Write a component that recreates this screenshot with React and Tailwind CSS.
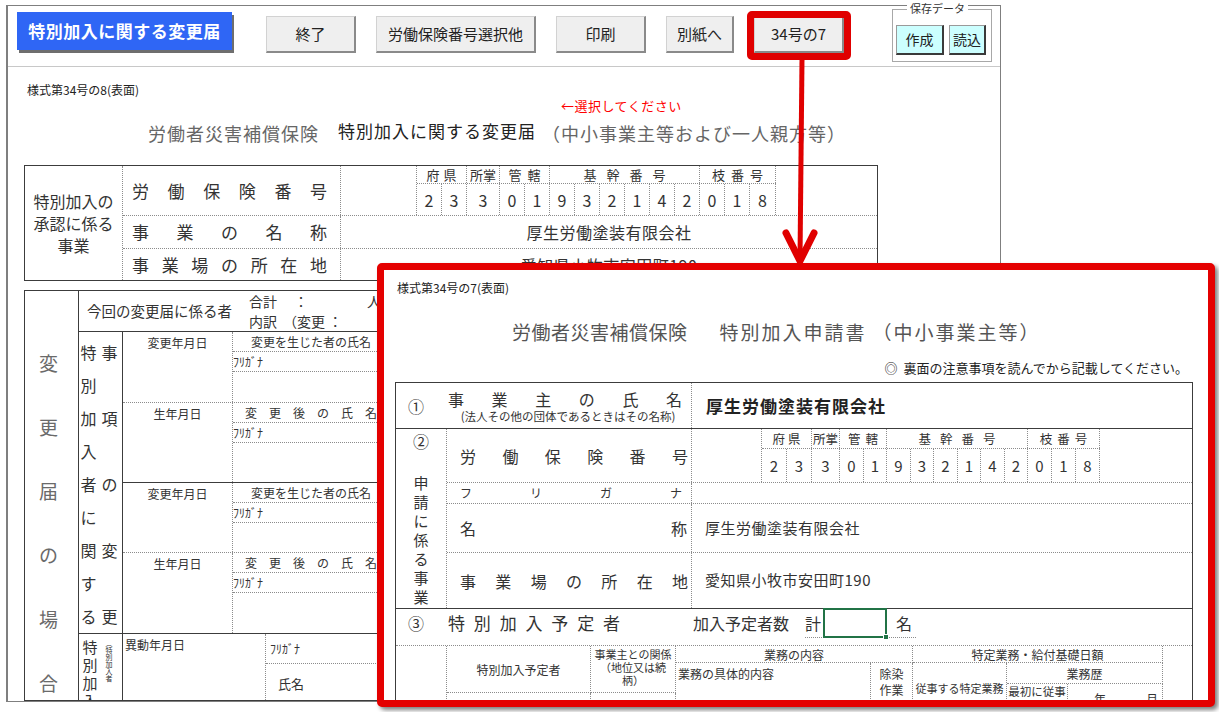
import React from "react";

const dR = "[border-right:1px_dotted_#8c8c8c]";
const dB = "[border-bottom:1px_dotted_#8c8c8c]";
const dL = "[border-left:1px_dotted_#8c8c8c]";
const sR = "[border-right:1px_solid_#3c3c3c]";
const sB = "[border-bottom:1px_solid_#3c3c3c]";

const DIGITS = "23301932142018".split("");

function Spread({ chars, className }) {
  return (
    <div className={`flex justify-between ${className}`}>
      {chars.split("").map((c, i) => (
        <span key={i}>{c}</span>
      ))}
    </div>
  );
}

function NumberGrid({ cellW, groups, headH, headText, digText }) {
  return (
    <div className={`h-full flex flex-col ${dL}`}>
      <div className={`flex shrink-0 ${headH} ${dB}`}>
        {groups.map((g, i) => (
          <div key={i} className={`${g.w} ${dR} flex items-center justify-center ${g.gap} ${headText}`}>
            {g.t.split("").map((c, j) => (
              <span key={j}>{c}</span>
            ))}
          </div>
        ))}
      </div>
      <div className="flex flex-1">
        {DIGITS.map((d, i) => (
          <div key={i} className={`${cellW[i]} ${dR} flex items-center justify-center ${digText}`}>
            {d}
          </div>
        ))}
      </div>
    </div>
  );
}

const leftCells = ["w-[25px]", "w-[25px]", "w-[33px]", "w-[25px]", "w-[25px]", "w-[25px]", "w-[25px]", "w-[25px]", "w-[25px]", "w-[25px]", "w-[25px]", "w-[25px]", "w-[25px]", "w-[26px]"];
const leftGroups = [
  { t: "府県", w: "w-[50px]", gap: "gap-[4px]" },
  { t: "所掌", w: "w-[33px]", gap: "gap-0" },
  { t: "管轄", w: "w-[50px]", gap: "gap-[6px]" },
  { t: "基幹番号", w: "w-[150px]", gap: "gap-[10px]" },
  { t: "枝番号", w: "w-[76px]", gap: "gap-[6px]" },
];
const rightCells = ["w-[25px]", "w-[25px]", "w-[28px]", "w-[24px]", "w-[23px]", "w-[24px]", "w-[23px]", "w-[24px]", "w-[23px]", "w-[24px]", "w-[23px]", "w-[24px]", "w-[24px]", "w-[24px]"];
const rightGroups = [
  { t: "府県", w: "w-[50px]", gap: "gap-[3px]" },
  { t: "所掌", w: "w-[28px]", gap: "gap-0" },
  { t: "管轄", w: "w-[47px]", gap: "gap-[5px]" },
  { t: "基幹番号", w: "w-[141px]", gap: "gap-[9px]" },
  { t: "枝番号", w: "w-[72px]", gap: "gap-[5px]" },
];

function Btn({ className, children }) {
  return (
    <div
      className={`mt-[10px] h-[37px] bg-[#efefef] border border-[#d2d2d2] border-r-2 border-b-2 border-r-[#8a8a8a] border-b-[#8a8a8a] flex items-center justify-center text-[15px] text-[#222] ${className}`}
    >
      {children}
    </div>
  );
}

function Toolbar() {
  return (
    <div className="h-[61px] border-b border-[#c8c8c8] flex items-start shrink-0">
      <div className="ml-[9px] mt-[6px] w-[215px] h-[38px] bg-[#2f66f5] shadow-[2px_3px_0_#6e6e6e] flex items-center justify-center text-white text-[17px] font-bold tracking-[0.5px]">
        特別加入に関する変更届
      </div>
      <Btn className="ml-[34px] w-[90px]">終了</Btn>
      <Btn className="ml-[20px] w-[160px]">労働保険番号選択他</Btn>
      <Btn className="ml-[20px] w-[90px]">印刷</Btn>
      <Btn className="ml-[20px] w-[68px]">別紙へ</Btn>
      <div className="relative ml-[20px]">
        <Btn className="w-[90px]">34号の7</Btn>
        <div className="absolute -left-[7px] -right-[7px] top-[5px] -bottom-[7px] border-[7px] border-[#e00000] rounded-[5px]"></div>
      </div>
      <div className="relative ml-[48px] mt-[3px] w-[100px] h-[53px] border border-[#a8a8a8] flex items-start pl-[3px] pt-[15px]">
        <div className="absolute -top-[8px] left-[14px] bg-white px-[3px] text-[11px] leading-[12px] text-[#333]">
          保存データ
        </div>
        <div className="w-[48px] h-[30px] bg-[#ccffff] border border-[#9a9a9a] border-r-2 border-b-2 border-r-[#3a3a3a] border-b-[#3a3a3a] flex items-center justify-center text-[14px] text-[#222]">
          作成
        </div>
        <div className="ml-[5px] w-[37px] h-[30px] bg-[#ccffff] border border-[#9a9a9a] border-r-2 border-b-2 border-r-[#3a3a3a] border-b-[#3a3a3a] flex items-center justify-center text-[14px] text-[#222]">
          読込
        </div>
      </div>
    </div>
  );
}

function Table1() {
  return (
    <div className="ml-[16px] mt-[20px] w-[854px] h-[116px] shrink-0 border border-[#3c3c3c] flex text-[#333]">
      <div className={`w-[98px] shrink-0 ${dR} flex items-center justify-center text-center text-[16px] leading-[22px]`}>
        <div className="flex flex-col items-center">
          <span>特別加入の</span>
          <span>承認に係る</span>
          <span>事業</span>
        </div>
      </div>
      <div className="flex-1 flex flex-col">
        <div className={`h-[50px] shrink-0 flex ${dB}`}>
          <div className={`w-[218px] shrink-0 ${dR} pl-[9px] pr-[13px] flex items-center`}>
            <Spread chars="労働保険番号" className="w-full text-[17px] leading-[20px]" />
          </div>
          <div className="pl-[75px] h-full">
            <NumberGrid cellW={leftCells} groups={leftGroups} headH="h-[18px]" headText="text-[13px] leading-[16px]" digText="text-[16px] leading-[20px]" />
          </div>
        </div>
        <div className={`h-[33px] shrink-0 flex ${dB}`}>
          <div className={`w-[218px] shrink-0 ${dR} pl-[9px] pr-[13px] flex items-center`}>
            <Spread chars="事業の名称" className="w-full text-[17px] leading-[20px]" />
          </div>
          <div className="flex-1 flex items-center justify-center text-[16px] tracking-[0.5px]">厚生労働塗装有限会社</div>
        </div>
        <div className="flex-1 flex">
          <div className={`w-[218px] shrink-0 ${dR} pl-[9px] pr-[13px] flex items-center`}>
            <Spread chars="事業場の所在地" className="w-full text-[17px] leading-[20px]" />
          </div>
          <div className="flex-1 flex items-center justify-center text-[16px] tracking-[0.5px]">愛知県小牧市安田町190</div>
        </div>
      </div>
    </div>
  );
}

function ChangeBlock({ h, bottom, left, head }) {
  return (
    <div className={`${h} shrink-0 flex ${bottom}`}>
      <div className={`w-[110px] shrink-0 ${dR} text-center text-[12px] leading-[16px] pt-[3px]`}>{left}</div>
      <div className="w-[156px] shrink-0 flex flex-col">
        <div className={`h-[20px] ${dB} flex items-center justify-center text-[12px] leading-[16px]`}>{head}</div>
        <div className={`h-[20px] ${dB} flex items-center text-[12px] leading-[16px]`}>ﾌﾘｶﾞﾅ</div>
      </div>
      <div className={`flex-1 ${dL}`}></div>
    </div>
  );
}

function Table2() {
  const grid = ["特", "事", "別", "", "加", "項", "入", "", "者", "の", "に", "", "関", "変", "す", "", "る", "更"];
  return (
    <div className="ml-[16px] mt-[9px] w-[854px] h-[411px] shrink-0 border border-[#3c3c3c] flex text-[#333] overflow-hidden">
      <div className={`w-[54px] shrink-0 ${sR} flex flex-col pt-[40px] pr-[6px]`}>
        {"変更届の場合".split("").map((c, i) => (
          <div key={i} className="h-[64px] shrink-0 flex items-center justify-center text-[19px] leading-[22px] text-[#6a6a6a]">
            {c}
          </div>
        ))}
      </div>
      <div className="flex-1 flex flex-col">
        <div className={`h-[41px] shrink-0 ${sB} flex items-center`}>
          <div className="pl-[8px] w-[170px] text-[14.5px] leading-[18px]">今回の変更届に係る者</div>
          <div className="flex flex-col text-[14px] leading-[20px]">
            <div className="flex">
              <span className="w-[45px]">合計</span>
              <span className="w-[73px]">：</span>
              <span>人</span>
            </div>
            <div className="flex">
              <span className="w-[34px]">内訳</span>
              <span>（変更&nbsp;：</span>
            </div>
          </div>
        </div>
        <div className={`h-[302px] shrink-0 ${sB} flex`}>
          <div className={`w-[44px] shrink-0 ${sR} pt-[3px] grid grid-cols-[19px_23px] grid-rows-[repeat(9,33px)] text-[16px] leading-[20px]`}>
            {grid.map((c, i) => (
              <div key={i} className="flex items-center justify-center">
                {c}
              </div>
            ))}
          </div>
          <div className="flex-1 flex flex-col">
            <ChangeBlock h="h-[71px]" bottom={dB} left="変更年月日" head="変更を生じた者の氏名" />
            <ChangeBlock h="h-[80px]" bottom={sB} left="生年月日" head={<Spread chars="変更後の氏名" className="w-full px-[12px]" />} />
            <ChangeBlock h="h-[70px]" bottom={dB} left="変更年月日" head="変更を生じた者の氏名" />
            <ChangeBlock h="h-[80px]" bottom="" left="生年月日" head={<Spread chars="変更後の氏名" className="w-full px-[12px]" />} />
          </div>
        </div>
        <div className="flex-1 flex">
          <div className={`w-[44px] shrink-0 ${sR} flex pt-[4px]`}>
            <div className="w-[22px] flex flex-col items-center text-[15px] leading-[18px]">
              <span>特</span>
              <span>別</span>
              <span>加</span>
              <span>入</span>
            </div>
            <div className="ml-[4px] pt-[2px] [writing-mode:vertical-rl] text-[7px] leading-[8px]">（特別加入者</div>
          </div>
          <div className={`w-[143px] shrink-0 ${dR} pl-[2px] pt-[3px] text-[12px] leading-[16px]`}>異動年月日</div>
          <div className="w-[160px] shrink-0 flex flex-col">
            <div className={`h-[30px] ${dB} flex items-center pl-[4px] text-[12px]`}>ﾌﾘｶﾞﾅ</div>
            <div className="pl-[12px] pt-[12px] text-[13px] leading-[16px]">氏名</div>
          </div>
          <div className={`flex-1 ${dL}`}></div>
        </div>
      </div>
    </div>
  );
}

function LeftSheet() {
  return (
    <div className="ml-[6px] mt-[5px] w-[995px] h-[697px] border border-l-2 border-[#7f7f7f] bg-white flex flex-col">
      <Toolbar />
      <div className="pl-[19px] pt-[15px] text-[12px] leading-[16px] text-[#222]">様式第34号の8(表面)</div>
      <div className="pl-[553px] text-[13px] leading-[16px] text-[#ff0000] tracking-[0.5px]">←選択してください</div>
      <div className="mt-[7px] pl-[140px] flex items-center h-[24px] shrink-0">
        <span className="text-[18px] tracking-[1px] text-[#666]">労働者災害補償保険</span>
        <span className="ml-[19px] -mt-[5px] text-[17px] tracking-[1px] text-[#222]">特別加入に関する変更届</span>
        <span className="ml-[6px] text-[18px] tracking-[1px] text-[#666]">（中小事業主等および一人親方等）</span>
      </div>
      <Table1 />
      <Table2 />
    </div>
  );
}

function Overlay() {
  return (
    <div className="absolute left-[377px] top-[263px] w-[838px] h-[444px] border-[7px] border-[#e40000] rounded-[5px] bg-white overflow-hidden shadow-[3px_3px_4px_rgba(0,0,0,0.5)] text-[#333]">
      <div className="pl-[13px] pt-[10px] text-[12px] leading-[16px] text-[#222]">様式第34号の7(表面)</div>
      <div className="mt-[23px] pl-[128px] flex items-center h-[26px] text-[#555]">
        <span className="text-[19px] tracking-[0.5px]">労働者災害補償保険</span>
        <span className="ml-[32px] text-[19px] tracking-[2px]">特別加入申請書</span>
        <span className="ml-[6px] text-[19px] tracking-[2px]">（中小事業主等）</span>
      </div>
      <div className="mt-[15px] pr-[20px] text-right text-[13px] leading-[16px] text-[#222]">◎&nbsp;&nbsp;裏面の注意事項を読んでから記載してください。</div>
      <div className="ml-[11px] mt-[6px] w-[798px] h-[330px] border border-[#3c3c3c] flex flex-col">
        <div className={`h-[46px] shrink-0 ${sB} flex`}>
          <div className={`w-[296px] shrink-0 ${dR} flex items-center`}>
            <div className="w-[40px] text-center text-[16px] leading-[20px]">①</div>
            <div className="flex-1 flex flex-col pl-[12px] pr-[9px] pt-[1px]">
              <Spread chars="事業主の氏名" className="text-[16px] leading-[20px]" />
              <div className="text-center text-[11.5px] leading-[14px] pl-[6px]">(法人その他の団体であるときはその名称)</div>
            </div>
          </div>
          <div className="flex-1 flex items-center pl-[14px] text-[17px] font-bold tracking-[1px] text-[#222]">厚生労働塗装有限会社</div>
        </div>
        <div className={`h-[180px] shrink-0 ${sB} flex`}>
          <div className={`w-[51px] shrink-0 ${dR} flex flex-col items-center pt-[3px]`}>
            <div className="text-[16px] leading-[18px]">②</div>
            <div className="mt-[23px] flex flex-col items-center text-[15px] leading-[19px]">
              {"申請に係る事業".split("").map((c, i) => (
                <span key={i}>{c}</span>
              ))}
            </div>
          </div>
          <div className="flex-1 flex flex-col">
            <div className={`h-[54px] shrink-0 flex ${dB}`}>
              <div className={`w-[245px] shrink-0 ${dR} pl-[13px] pr-[3px] flex items-center`}>
                <Spread chars="労働保険番号" className="w-full text-[16px] leading-[20px]" />
              </div>
              <div className="pl-[69px] h-full">
                <NumberGrid cellW={rightCells} groups={rightGroups} headH="h-[20px]" headText="text-[12.5px] leading-[16px]" digText="text-[15px] leading-[20px]" />
              </div>
            </div>
            <div className={`h-[21px] shrink-0 flex ${dB}`}>
              <div className={`w-[245px] shrink-0 ${dR} pl-[13px] pr-[9px] flex items-center`}>
                <Spread chars="フリガナ" className="w-full text-[12px] leading-[16px]" />
              </div>
            </div>
            <div className={`h-[49px] shrink-0 flex ${dB}`}>
              <div className={`w-[245px] shrink-0 ${dR} pl-[13px] pr-[4px] flex items-center`}>
                <Spread chars="名称" className="w-full text-[16px] leading-[20px]" />
              </div>
              <div className="flex-1 flex items-center pl-[13px] text-[15px] tracking-[0.5px]">厚生労働塗装有限会社</div>
            </div>
            <div className="flex-1 flex">
              <div className={`w-[245px] shrink-0 ${dR} pl-[13px] pr-[3px] flex items-center`}>
                <Spread chars="事業場の所在地" className="w-full text-[16px] leading-[20px]" />
              </div>
              <div className="flex-1 flex items-center pl-[13px] text-[15px] tracking-[0.5px]">愛知県小牧市安田町190</div>
            </div>
          </div>
        </div>
        <div className={`h-[37px] shrink-0 ${dB} flex items-center pb-[8px]`}>
          <div className="w-[40px] text-center text-[16px] leading-[20px]">③</div>
          <Spread chars="特別加入予定者" className="ml-[12px] w-[172px] text-[17px] leading-[20px]" />
          <div className="ml-[73px] text-[16px] leading-[20px]">加入予定者数</div>
          <div className={`ml-[16px] flex items-center h-[30px] ${dB}`}>
            <span className="text-[16px] leading-[20px]">計</span>
            <div className="relative ml-[2px] w-[64px] h-[30px] border-2 border-[#217346]">
              <div className="absolute -right-[4px] -bottom-[4px] w-[6px] h-[6px] bg-[#217346] border border-white"></div>
            </div>
            <span className="ml-[9px] pr-[4px] text-[16px] leading-[20px]">名</span>
          </div>
        </div>
        <div className="flex-1 grid grid-cols-[51px_144px_85px_195px_42px_94px_61px_95px_1fr] grid-rows-[17px_21px_9px_40px] text-[12px] leading-[13px]">
          <div className={`col-start-1 row-start-1 row-span-4 ${dR}`}></div>
          <div className={`col-start-2 row-start-1 row-span-3 ${dR} ${dB} flex items-center justify-center`}>特別加入予定者</div>
          <div className={`col-start-3 row-start-1 row-span-3 ${dR} ${dB} flex flex-col items-center pt-[2px] text-[11px] leading-[13px] whitespace-nowrap`}>
            <span>事業主との関係</span>
            <span>（地位又は続</span>
            <span>柄）</span>
          </div>
          <div className={`col-start-4 col-span-2 row-start-1 ${dR} ${dB} flex items-center justify-center`}>業務の内容</div>
          <div className={`col-start-4 row-start-2 row-span-3 ${dR} pl-[2px] pt-[4px]`}>業務の具体的内容</div>
          <div className={`col-start-5 row-start-2 row-span-3 ${dR} flex flex-col items-center pt-[3px] leading-[16px]`}>
            <span>除染</span>
            <span>作業</span>
          </div>
          <div className={`col-start-6 col-span-3 row-start-1 ${dR} ${dB} flex items-center justify-center`}>特定業務・給付基礎日額</div>
          <div className={`col-start-6 row-start-2 row-span-3 ${dR} flex justify-center pt-[19px] text-[11px] whitespace-nowrap`}>従事する特定業務</div>
          <div className={`col-start-7 col-span-2 row-start-2 ${dR} ${dB} flex items-center justify-center`}>業務歴</div>
          <div className={`col-start-7 row-start-3 row-span-2 ${dR} flex justify-center pt-[1px] text-[11.5px] whitespace-nowrap`}>最初に従事</div>
          <div className={`col-start-8 row-start-3 row-span-2 ${dR} flex pt-[8px] pl-[26px]`}>
            <span>年</span>
            <span className="ml-[40px]">月</span>
          </div>
          <div className={`col-start-2 row-start-4 ${dR}`}></div>
          <div className={`col-start-3 row-start-4 ${dR}`}></div>
        </div>
      </div>
    </div>
  );
}

function Arrow() {
  return (
    <svg className="absolute left-[780px] top-[57px] z-10" width="40" height="212" viewBox="0 0 40 212">
      <line x1="22" y1="2" x2="20" y2="203" stroke="#e00000" strokeWidth="5" />
      <polyline points="6,176 20,204 34,176" fill="none" stroke="#e00000" strokeWidth="7" strokeLinecap="round" strokeLinejoin="miter" />
    </svg>
  );
}

export default function App() {
  return (
    <div className="relative w-[1219px] h-[712px] overflow-hidden bg-white font-['Noto_Sans_CJK_JP','Noto_Sans',sans-serif] pt-[0.02px]">
      <LeftSheet />
      <Overlay />
      <Arrow />
    </div>
  );
}
